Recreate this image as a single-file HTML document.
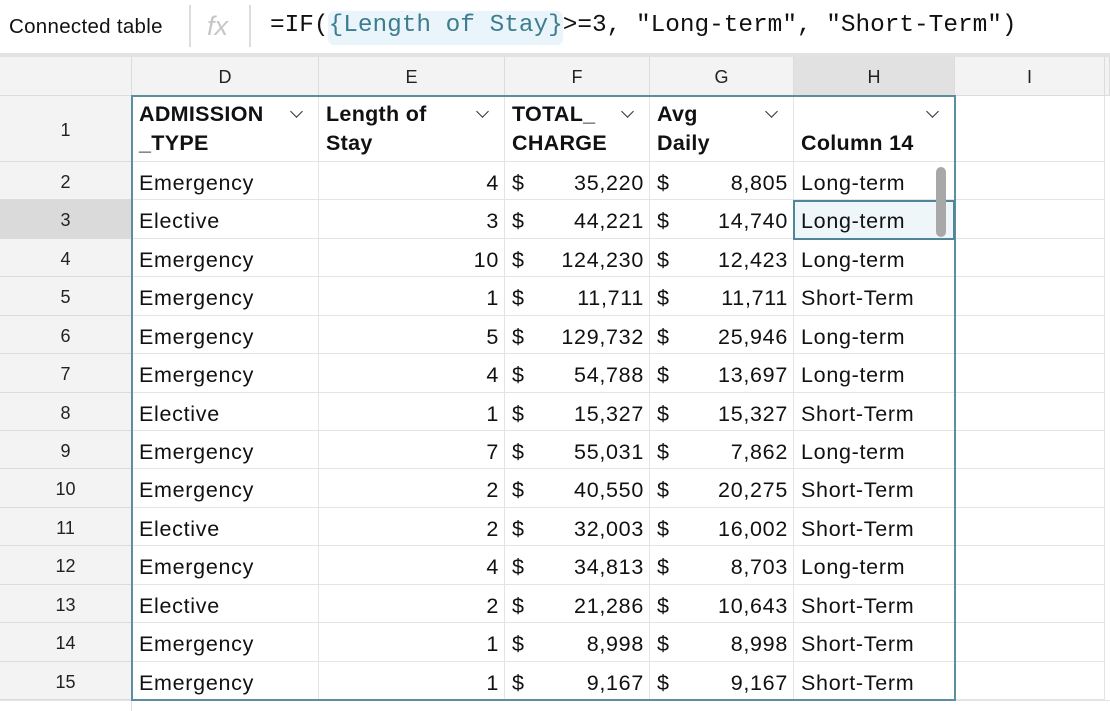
<!DOCTYPE html>
<html><head><meta charset="utf-8"><style>
*{margin:0;padding:0;box-sizing:border-box}
body{width:1110px;height:711px;overflow:hidden;background:#fff;font-family:"Liberation Sans",sans-serif;color:#111;position:relative}
.a{position:absolute}
.fb{left:0;top:0;width:1110px;height:55px;background:#fff}
.sep{top:0;width:2px;height:55px;background:#ddd}
.gh{background:#f3f3f3;border-right:1px solid #dcdcdc;border-bottom:1px solid #dcdcdc;text-align:center;color:#222}
.c{border-right:1px solid #e4e4e4;border-bottom:1px solid #e4e4e4;font-size:21.5px;letter-spacing:0.7px;white-space:nowrap;overflow:hidden}
.l{padding-left:7px}
.r{text-align:right;padding-right:5px}
.h{font-weight:bold;font-size:21.5px;letter-spacing:0.3px;line-height:29px;padding:4px 7px;white-space:normal}
.chev{position:absolute;width:9px;height:9px;border-right:1.5px solid #333;border-bottom:1.5px solid #333;transform:rotate(45deg)}
</style></head><body>
<div class="a fb"></div>
<div class="a" style="left:9px;top:15px;font-size:20.5px;letter-spacing:0.3px">Connected table</div>
<div class="a sep" style="left:189px;top:5px;height:42px"></div>
<div class="a" style="left:207px;top:11px;font-size:27px;font-style:italic;color:#c6c6c6">fx</div>
<div class="a sep" style="left:249px;top:5px;height:42px"></div>
<div class="a" style="left:328px;top:11px;width:235px;height:34px;background:#e9f5fa;border-radius:6px"></div>
<div class="a" style="left:270px;top:12px;font-family:'Liberation Mono',monospace;font-size:24.4px;white-space:pre;color:#111">=IF(<span style="color:#3d7d8f">{Length of Stay}</span>&gt;=3, "Long-term", "Short-Term")</div>
<div class="a" style="left:0;top:53px;width:1110px;height:4px;background:#e2e2e2"></div>
<div id="g"></div>
<script>
var cols=[[0,132],[132,319],[319,505],[505,650],[650,794],[794,955],[955,1105],[1105,1110]];
var names=["","D","E","F","G","H","I",""];
var h="";
for(var i=0;i<cols.length;i++){var x=cols[i][0],w=cols[i][1]-x;
h+='<div class="a gh" style="left:'+x+'px;top:57px;width:'+w+'px;height:39px;line-height:41px;font-size:18px;'+(i==5?'background:#e1e1e1;':'')+'">'+names[i]+'</div>';}
var data=[["Emergency",4,"35,220","8,805","Long-term"],["Elective",3,"44,221","14,740","Long-term"],["Emergency",10,"124,230","12,423","Long-term"],["Emergency",1,"11,711","11,711","Short-Term"],["Emergency",5,"129,732","25,946","Long-term"],["Emergency",4,"54,788","13,697","Long-term"],["Elective",1,"15,327","15,327","Short-Term"],["Emergency",7,"55,031","7,862","Long-term"],["Emergency",2,"40,550","20,275","Short-Term"],["Elective",2,"32,003","16,002","Short-Term"],["Emergency",4,"34,813","8,703","Long-term"],["Elective",2,"21,286","10,643","Short-Term"],["Emergency",1,"8,998","8,998","Short-Term"],["Emergency",1,"9,167","9,167","Short-Term"]];
h+='<div class="a gh" style="left:0;top:96px;width:132px;height:66px;line-height:68px;font-size:18px">1</div>';
var hd=["ADMISSION<br>_TYPE","Length of<br>Stay","TOTAL_<br>CHARGE","Avg<br>Daily",""];
for(var j=0;j<5;j++){var x=cols[j+1][0],w=cols[j+1][1]-x;
h+='<div class="a c h" style="left:'+x+'px;top:96px;width:'+w+'px;height:66px">'+(j==4?'<div style="margin-top:29px">Column 14</div>':hd[j])+'<span class="chev" style="left:'+(w-27)+'px;top:11px"></span></div>';}
h+='<div class="a" style="left:955px;top:96px;width:150px;height:66px;border-bottom:1px solid #e4e4e4;border-right:1px solid #e4e4e4"></div>';
var rh=38.43;
for(var r=0;r<14;r++){var y=Math.round(162+r*rh),y2=Math.round(162+(r+1)*rh),hh=y2-y;var d=data[r];
h+='<div class="a gh" style="left:0;top:'+y+'px;width:132px;height:'+hh+'px;line-height:'+(hh+2)+'px;font-size:18px;'+(r==1?'background:#dadada;':'')+'">'+(r+2)+'</div>';
var cells=['<div class="l">'+d[0]+'</div>','<div class="r">'+d[1]+'</div>','<div class="l" style="position:relative">$<span style="position:absolute;right:5px">'+d[2]+'</span></div>','<div class="l" style="position:relative">$<span style="position:absolute;right:5px">'+d[3]+'</span></div>','<div class="l">'+d[4]+'</div>',''];
for(var j=0;j<6;j++){var x=cols[j+1][0],w=cols[j+1][1]-x;
h+='<div class="a c" style="left:'+x+'px;top:'+y+'px;width:'+w+'px;height:'+hh+'px;line-height:'+(hh+4)+'px;'+(j==4&&r==1?'background:#eef6f9;':'')+'">'+cells[j]+'</div>';}}
h+='<div class="a" style="left:0;top:700px;width:1110px;height:11px;background:#fff;border-top:1px solid #e4e4e4"></div>';
h+='<div class="a" style="left:131px;top:700px;width:1px;height:11px;background:#ddd"></div>';
h+='<div class="a" style="left:131px;top:95px;width:825px;height:606px;border:2px solid #5b8fa0"></div>';
h+='<div class="a" style="left:793px;top:200px;width:162px;height:40px;border:2px solid #4f8799"></div>';
h+='<div class="a" style="left:936px;top:167px;width:10px;height:70px;background:#a8a8a8;border-radius:5px"></div>';
document.getElementById('g').innerHTML=h;
</script>
</body></html>
